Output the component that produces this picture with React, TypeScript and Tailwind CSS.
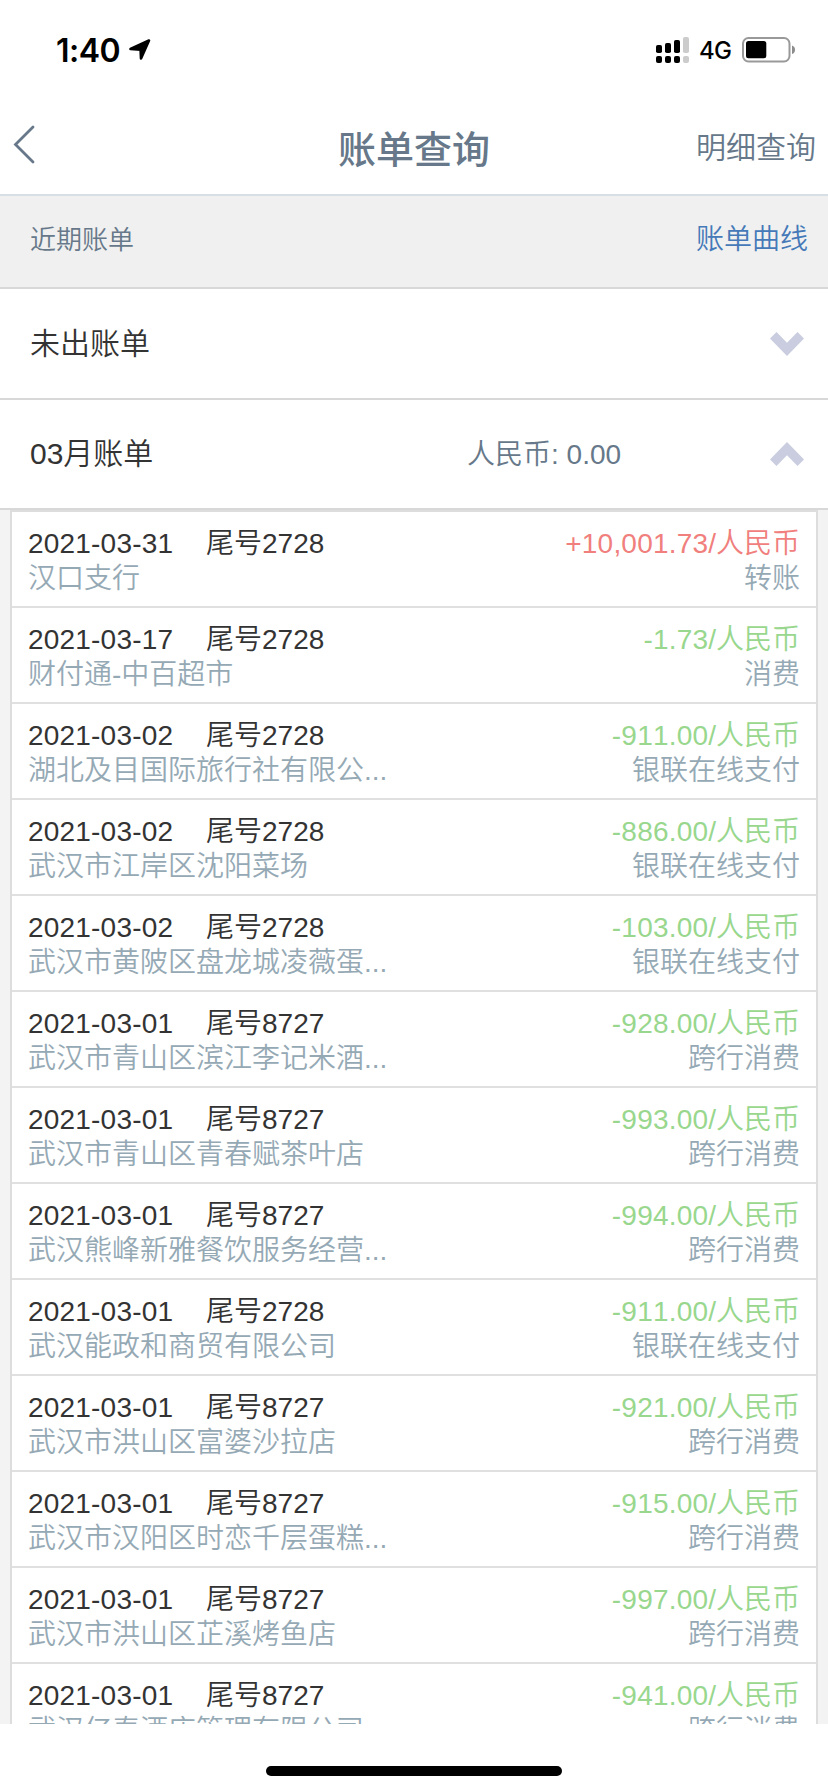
import React, { useState } from "react";

interface Transaction {
  date: string;
  card: string;
  merchant: string;
  amount: string;
  type: string;
}

const transactions: Transaction[] = [
  { date: "2021-03-31", card: "2728", merchant: "汉口支行", amount: "+10,001.73", type: "转账" },
  { date: "2021-03-17", card: "2728", merchant: "财付通-中百超市", amount: "-1.73", type: "消费" },
  { date: "2021-03-02", card: "2728", merchant: "湖北及目国际旅行社有限公...", amount: "-911.00", type: "银联在线支付" },
  { date: "2021-03-02", card: "2728", merchant: "武汉市江岸区沈阳菜场", amount: "-886.00", type: "银联在线支付" },
  { date: "2021-03-02", card: "2728", merchant: "武汉市黄陂区盘龙城凌薇蛋...", amount: "-103.00", type: "银联在线支付" },
  { date: "2021-03-01", card: "8727", merchant: "武汉市青山区滨江李记米酒...", amount: "-928.00", type: "跨行消费" },
  { date: "2021-03-01", card: "8727", merchant: "武汉市青山区青春赋茶叶店", amount: "-993.00", type: "跨行消费" },
  { date: "2021-03-01", card: "8727", merchant: "武汉熊峰新雅餐饮服务经营...", amount: "-994.00", type: "跨行消费" },
  { date: "2021-03-01", card: "2728", merchant: "武汉能政和商贸有限公司", amount: "-911.00", type: "银联在线支付" },
  { date: "2021-03-01", card: "8727", merchant: "武汉市洪山区富婆沙拉店", amount: "-921.00", type: "跨行消费" },
  { date: "2021-03-01", card: "8727", merchant: "武汉市汉阳区时恋千层蛋糕...", amount: "-915.00", type: "跨行消费" },
  { date: "2021-03-01", card: "8727", merchant: "武汉市洪山区芷溪烤鱼店", amount: "-997.00", type: "跨行消费" },
  { date: "2021-03-01", card: "8727", merchant: "武汉亿泰酒店管理有限公司", amount: "-941.00", type: "跨行消费" },
];

const StatusBar: React.FC = () => (
  <div className="flex h-[88px] items-start justify-between pl-[56px] pr-[32px] pt-[30px] font-['Inter'] text-black">
    <div className="flex h-10 items-center">
      <span className="pt-px text-[32px] font-semibold leading-10 tracking-[-0.5px]">1:40</span>
      <svg className="ml-2" width="24" height="24" viewBox="0 0 24 24">
        <path
          d="M2.500 11 21 2.500 13 20.500 12.600 11.600Z"
          fill="black"
          stroke="black"
          strokeWidth="2.600"
          strokeLinejoin="round"
        />
      </svg>
    </div>
    <div className="flex h-10 items-center">
      <svg width="34" height="27" viewBox="0 0 34 27">
        <rect x="0" y="8" width="6" height="8" rx="1.8" />
        <rect x="9" y="6" width="6" height="10" rx="1.8" />
        <rect x="18" y="3" width="6" height="13" rx="1.8" />
        <rect x="27" y="0" width="6" height="16" rx="1.8" fill="#cccccc" />
        <rect x="0" y="19" width="6" height="7" rx="2" />
        <rect x="9" y="19" width="6" height="7" rx="2" />
        <rect x="18" y="19" width="6" height="7" rx="2" />
        <rect x="27" y="19" width="6" height="7" rx="2" fill="#cccccc" />
      </svg>
      <span className="ml-[9px] w-[33px] pt-0.5 text-[24px] font-medium leading-10 tracking-[-0.8px]">4G</span>
      <svg className="ml-[10px]" width="54" height="26" viewBox="0 0 54 26">
        <rect x="1" y="1" width="46.5" height="23.5" rx="5.5" fill="none" stroke="#999999" strokeWidth="2" />
        <rect x="4" y="4" width="20.3" height="17.3" rx="2.5" />
        <path d="M50 8.500c2 .6 3 2.300 3 4.300s-1 3.700-3 4.300z" fill="#8c8c8c" />
      </svg>
    </div>
  </div>
);

const Chevron: React.FC<{ open: boolean }> = ({ open }) => (
  <svg
    className={open ? "rotate-180" : ""}
    width="34"
    height="24"
    viewBox="0 0 34 24"
  >
    <path d="M0 6.500 6.500 0 17 10.800 27.500 0 34 6.500 17 24Z" fill="#c9cddf" />
  </svg>
);

const TransactionRow: React.FC<{ item: Transaction }> = ({ item }) => {
  const isIncome = item.amount.startsWith("+");

  return (
    <li className="flex h-24 justify-between border-b-2 border-[#e0e0e0] pl-4 pr-4 pt-[15px] text-[28px] leading-[34px]">
      <div>
        <div className="flex text-[#333333]">
          <span className="w-[178px] tracking-[0.2px]">{item.date}</span>
          <span>尾号{item.card}</span>
        </div>
        <div className="pt-px text-[#95a9b5]">{item.merchant}</div>
      </div>
      <div className="text-right">
        <div className={isIncome ? "text-[#f07f7d]" : "text-[#98d78d]"}>
          <span className="tracking-[0.2px]">{item.amount}</span>/人民币
        </div>
        <div className="pt-px text-[#95a9b5]">{item.type}</div>
      </div>
    </li>
  );
};

const App: React.FC = () => {
  const [expanded, setExpanded] = useState(true);

  return (
    <div className="flex h-[1792px] w-[828px] flex-col overflow-hidden bg-white font-['Liberation_Sans','Noto_Sans_CJK_SC_DemiLight','Noto_Sans_CJK_SC',sans-serif] font-normal [font-kerning:none]">
      <StatusBar />

      {/* Navigation */}
      <header className="grid h-[108px] grid-cols-3 items-center border-b-2 border-[#d8dfe4] pb-[1px] pt-[15px] text-[#667889]">
        <button className="pb-[9px] pl-3">
          <svg width="24" height="40" viewBox="0 0 24 40" fill="none">
            <path d="M21 3 3.500 20.500 21 38" stroke="#667889" strokeWidth="2.800" strokeLinecap="round" />
          </svg>
        </button>
        <h1 className="pt-[3px] text-center font-['Liberation_Sans','Noto_Sans_CJK_SC',sans-serif] text-[38px] font-medium leading-10">
          账单查询
        </h1>
        <button className="pr-3 text-right text-[30px] leading-10">明细查询</button>
      </header>

      {/* Recent bills */}
      <div className="flex h-[93px] items-center justify-between border-b-2 border-[#d8d8d8] bg-[#f0f0f0] pb-1 pl-[30px] pr-5">
        <span className="pt-px text-[26px] text-[#667889]">近期账单</span>
        <span className="text-[28px] text-[#4579b8]">账单曲线</span>
      </div>
      <div className="flex h-[111px] items-center justify-between border-b-2 border-[#d8d8d8] pl-[30px] pr-6">
        <span className="text-[30px] text-[#333333]">未出账单</span>
        <Chevron open={false} />
      </div>
      <div
        className="flex h-[110px] items-center border-b-2 border-[#d8d8d8] pl-[30px] pr-6"
        onClick={() => setExpanded(!expanded)}
      >
        <span className="w-[437px] pb-0.5 text-[30px] text-[#333333]">03月账单</span>
        <span className="flex-1 pt-px text-[28px] text-[#667889]">人民币: 0.00</span>
        <Chevron open={expanded} />
      </div>

      {/* Bill details */}
      <div className="h-[1214px] overflow-hidden bg-[#f3f3f3] px-2.5">
        {expanded && (
          <ul className="border-x-2 border-t-2 border-[#dddddd] bg-white">
            {transactions.map((item, index) => (
              <TransactionRow key={index} item={item} />
            ))}
          </ul>
        )}
      </div>

      {/* Home indicator */}
      <div className="flex flex-1 justify-center pt-[42px]">
        <div className="h-2.5 w-[296px] rounded-full bg-black" />
      </div>
    </div>
  );
};

export default App;
